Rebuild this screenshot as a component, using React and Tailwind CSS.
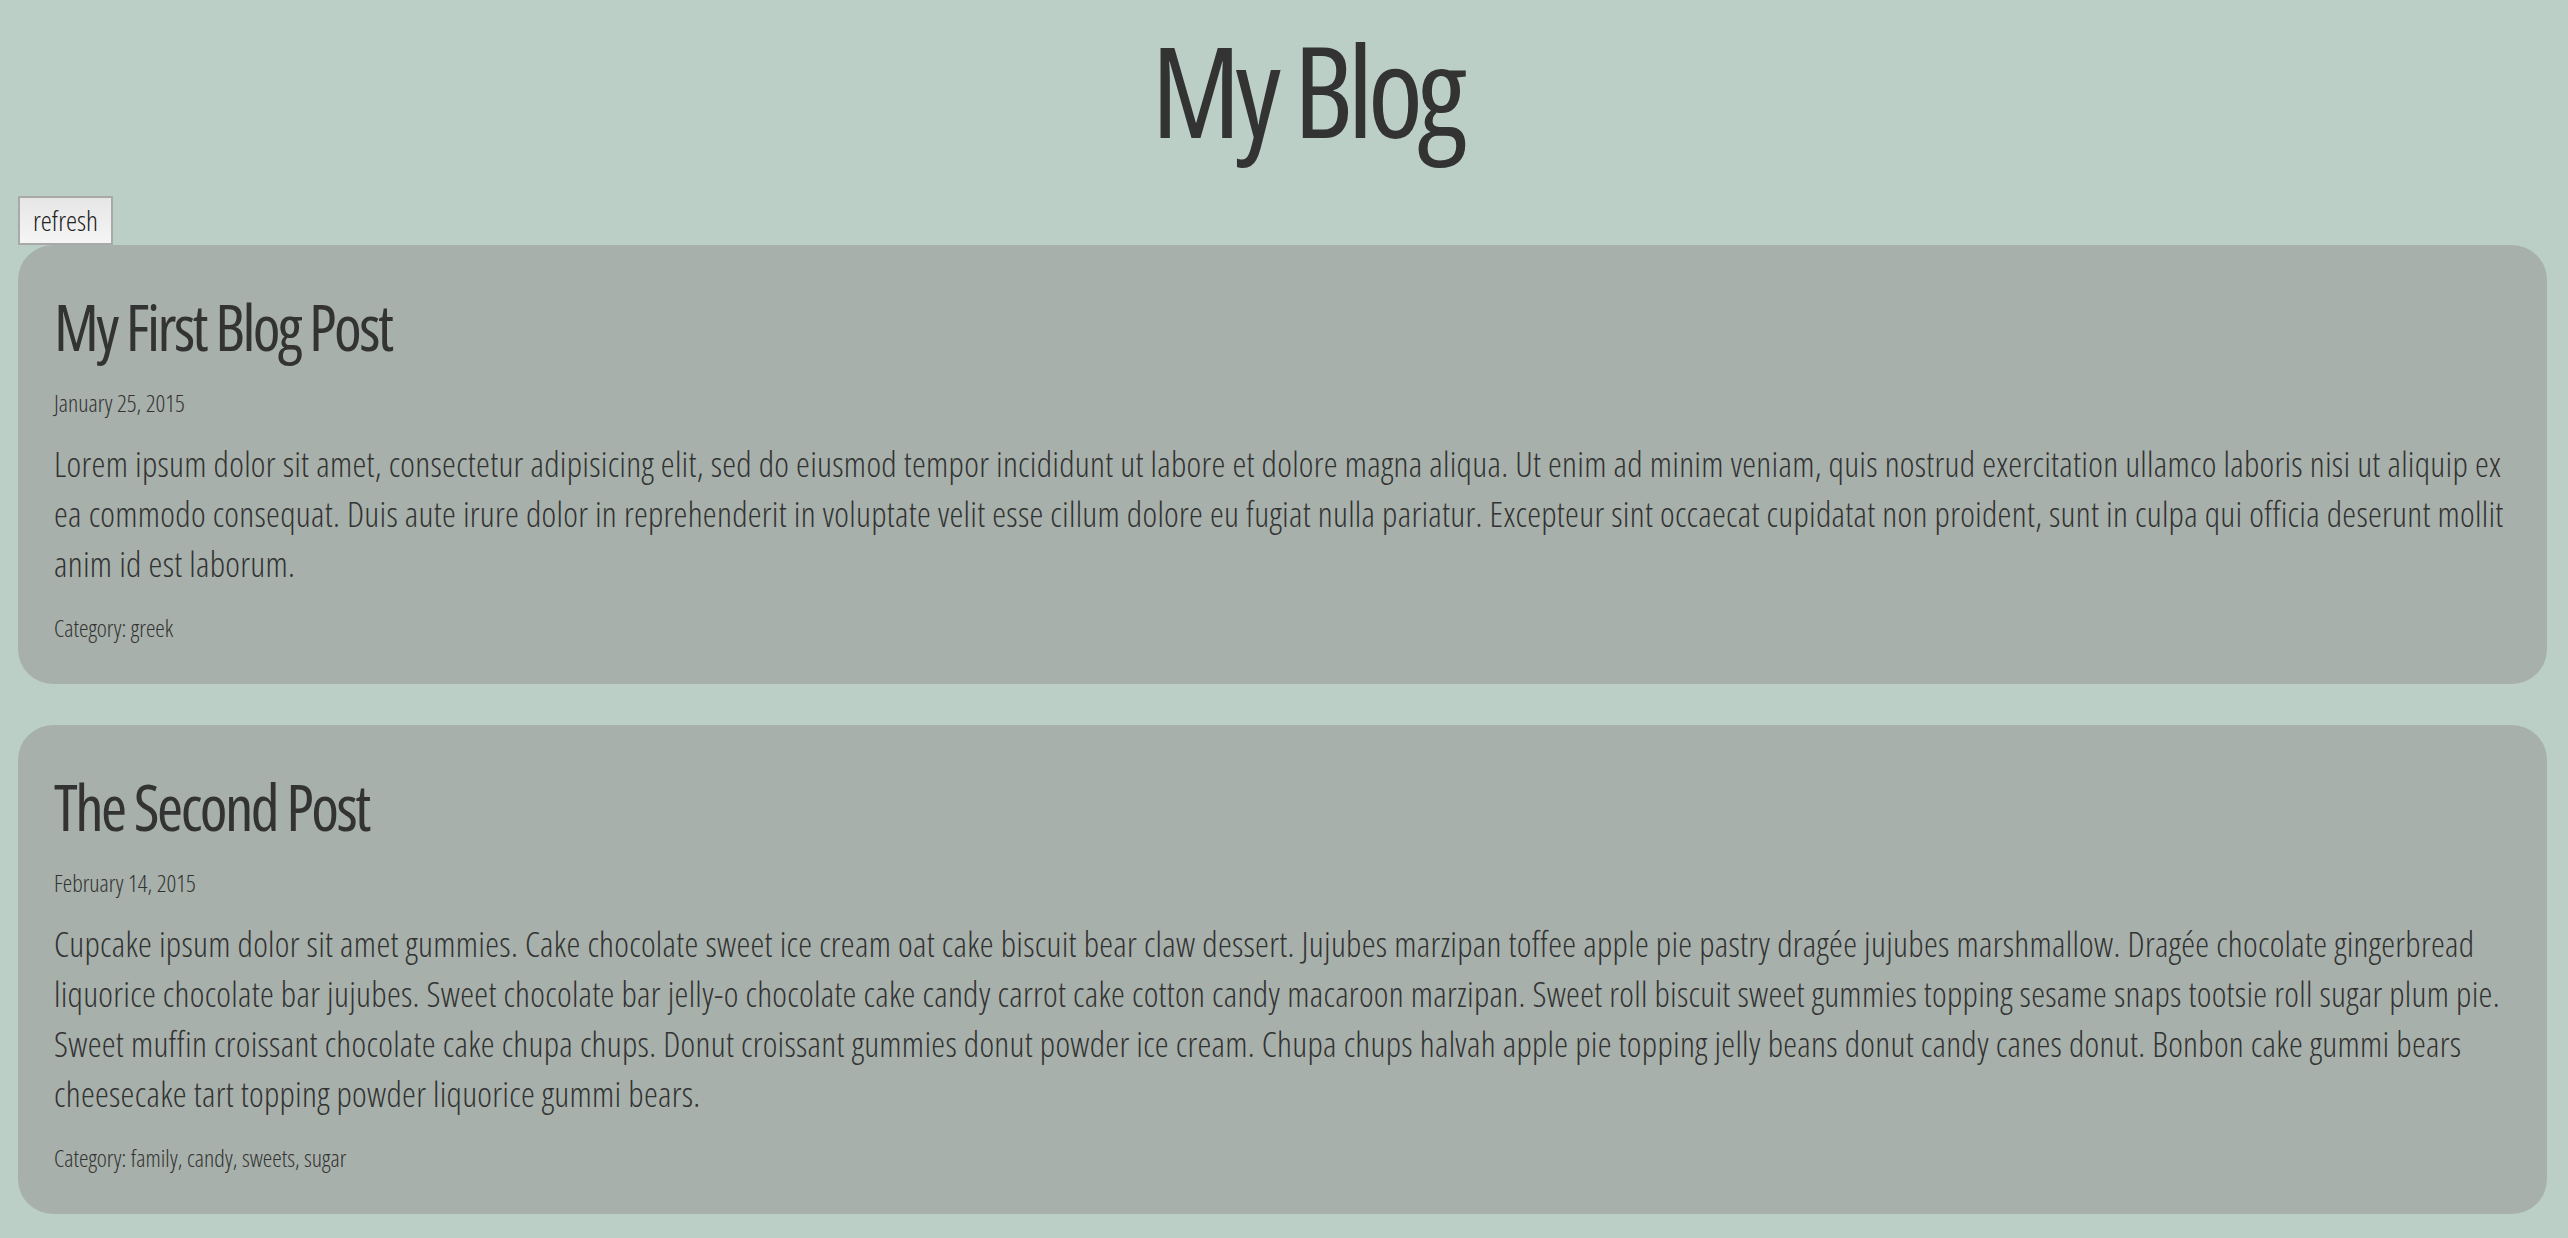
import { useState } from 'react';

const posts = [
  {
    id: 1,
    title: 'My First Blog Post',
    date: 'January 25, 2015',
    body:
      'Lorem ipsum dolor sit amet, consectetur adipisicing elit, sed do eiusmod tempor incididunt ut labore et dolore magna aliqua. Ut enim ad minim veniam, quis nostrud exercitation ullamco laboris nisi ut aliquip ex ea commodo consequat. Duis aute irure dolor in reprehenderit in voluptate velit esse cillum dolore eu fugiat nulla pariatur. Excepteur sint occaecat cupidatat non proident, sunt in culpa qui officia deserunt mollit anim id est laborum.',
    categories: ['greek']
  },
  {
    id: 2,
    title: 'The Second Post',
    date: 'February 14, 2015',
    body:
      'Cupcake ipsum dolor sit amet gummies. Cake chocolate sweet ice cream oat cake biscuit bear claw dessert. Jujubes marzipan toffee apple pie pastry dragée jujubes marshmallow. Dragée chocolate gingerbread liquorice chocolate bar jujubes. Sweet chocolate bar jelly-o chocolate cake candy carrot cake cotton candy macaroon marzipan. Sweet roll biscuit sweet gummies topping sesame snaps tootsie roll sugar plum pie. Sweet muffin croissant chocolate cake chupa chups. Donut croissant gummies donut powder ice cream. Chupa chups halvah apple pie topping jelly beans donut candy canes donut. Bonbon cake gummi bears cheesecake tart topping powder liquorice gummi bears.',
    categories: ['family', 'candy', 'sweets', 'sugar']
  }
];

function Post({ post }) {
  return (
    <article className="rounded-[35px] bg-[#a7b0aa] pl-[36px] pr-[22px] pt-[47px] pb-[39px]">
      <h2 className="text-[63px] leading-[1.1] font-normal tracking-[-0.04em]">{post.title}</h2>
      <p className="mt-[24px] text-[24px] leading-[35px]">{post.date}</p>
      <p className="mt-[19px] text-[35px] leading-[50px] tracking-[0.28px]">{post.body}</p>
      <p className="mt-[21px] text-[24px] leading-[35px]">
        Category: {post.categories.join(', ')}
      </p>
    </article>
  );
}

export default function App() {
  const [count, setCount] = useState(0);

  return (
    <div className="min-h-screen bg-[#bbcfc6] pt-[20px] pb-[23px] font-light text-[#333333] [font-family:'Open_Sans',sans-serif] [font-stretch:75%]">
      <h1 className="pl-[44px] text-center text-[126px] leading-[1.1] font-normal tracking-[-0.044em]">
        My Blog
      </h1>
      <div className="mt-[37px] pl-[18px] pr-[21px]">
        <button
          onClick={() => setCount(count + 1)}
          className="h-[49px] w-[95px] border-2 border-[#a9a9a9] bg-gradient-to-b from-[#e6e6e6] to-[#f5f5f5] text-[28px] leading-none text-[#222]"
        >
          refresh
        </button>
        <div className="flex flex-col gap-[41px]">
          {posts.map((post) => (
            <Post key={post.id} post={post} />
          ))}
        </div>
      </div>
    </div>
  );
}
